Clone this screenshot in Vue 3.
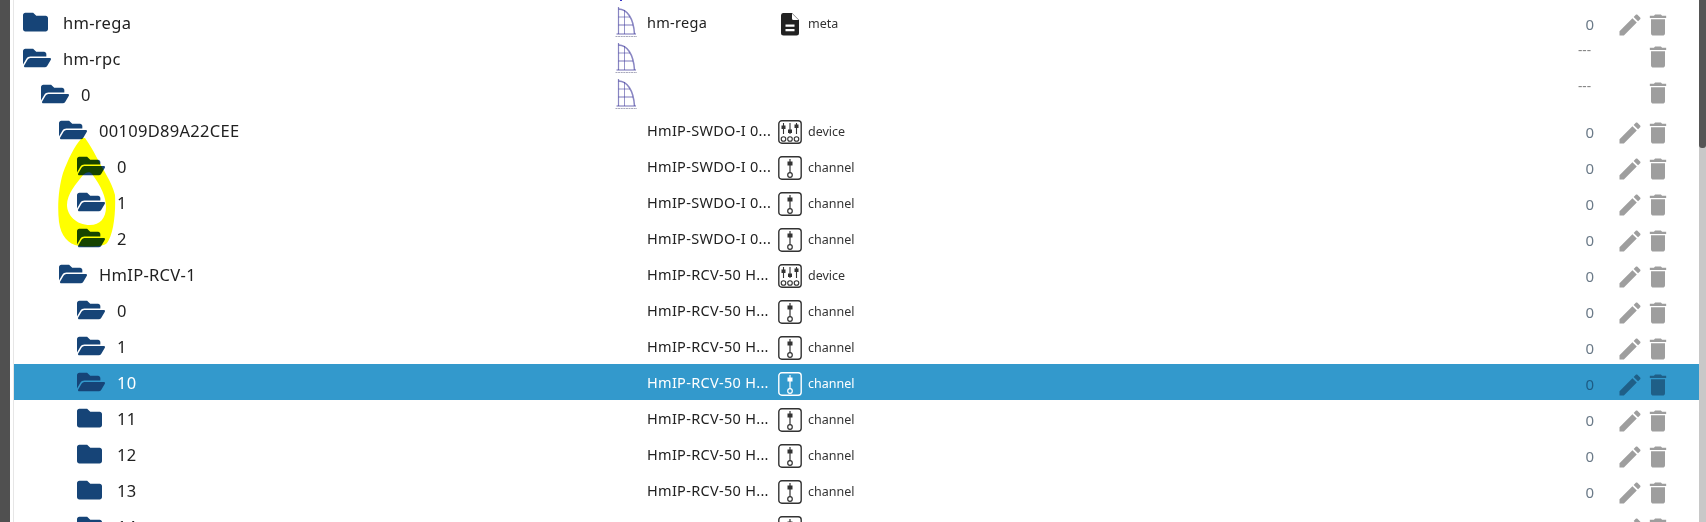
<script setup>
const paths = {
  closed: 'M464 128H272l-64-64H48C21.49 64 0 85.49 0 112v288c0 26.51 21.49 48 48 48h416c26.51 0 48-21.49 48-48V176c0-26.51-21.49-48-48-48z',
  open: 'M572.694 292.093L500.27 416.248A63.997 63.997 0 0 1 444.989 448H45.025c-18.523 0-30.064-20.093-20.731-36.093l72.424-124.155A64 64 0 0 1 152 256h399.964c18.523 0 30.064 20.093 20.73 36.093zM152 224h328v-48c0-26.51-21.49-48-48-48H272l-64-64H48C21.49 64 0 85.49 0 112v278.046l69.077-118.418C86.214 242.25 117.989 224 152 224z'
}
const swdo = 'HmIP-SWDO-I 0...'
const rcv = 'HmIP-RCV-50 H...'
const rows = [
  { level: 0, open: false, id: 'hm-rega', name: 'hm-rega', logo: true, icon: 'meta', type: 'meta', value: '0', edit: true },
  { level: 0, open: true, id: 'hm-rpc', name: '', logo: true, value: '---' },
  { level: 1, open: true, id: '0', name: '', logo: true, value: '---' },
  { level: 2, open: true, id: '00109D89A22CEE', name: swdo, icon: 'device', type: 'device', value: '0', edit: true },
  { level: 3, open: true, id: '0', name: swdo, icon: 'channel', type: 'channel', value: '0', edit: true },
  { level: 3, open: true, id: '1', name: swdo, icon: 'channel', type: 'channel', value: '0', edit: true },
  { level: 3, open: true, id: '2', name: swdo, icon: 'channel', type: 'channel', value: '0', edit: true },
  { level: 2, open: true, id: 'HmIP-RCV-1', name: rcv, icon: 'device', type: 'device', value: '0', edit: true },
  { level: 3, open: true, id: '0', name: rcv, icon: 'channel', type: 'channel', value: '0', edit: true },
  { level: 3, open: true, id: '1', name: rcv, icon: 'channel', type: 'channel', value: '0', edit: true },
  { level: 3, open: true, id: '10', name: rcv, icon: 'channel', type: 'channel', value: '0', edit: true, selected: true },
  { level: 3, open: false, id: '11', name: rcv, icon: 'channel', type: 'channel', value: '0', edit: true },
  { level: 3, open: false, id: '12', name: rcv, icon: 'channel', type: 'channel', value: '0', edit: true },
  { level: 3, open: false, id: '13', name: rcv, icon: 'channel', type: 'channel', value: '0', edit: true },
  { level: 3, open: false, id: '14', name: rcv, icon: 'channel', type: 'channel', value: '0', edit: true }
]
</script>

<template>
  <div class="page">
    <div class="sidebar"></div>
    <div class="tree">
      <i class="topdot"></i>
      <div v-for="(r, i) in rows" :key="i" class="row" :class="{ selected: r.selected }">
        <div class="cell-id" :style="{ paddingLeft: 9 + r.level * 18 + 'px' }">
          <svg v-if="r.open" class="folder-open" viewBox="0 64 576 384"><path :d="paths.open" /></svg>
          <svg v-else class="folder-closed" viewBox="0 64 512 384"><path :d="paths.closed" /></svg>
          <span class="id-text">{{ r.id }}</span>
        </div>
        <div class="cell-logo">
          <svg v-if="r.logo" class="logo" viewBox="0 0 24 32" fill="none">
            <g stroke="#3f3a9c" stroke-opacity=".62">
              <path d="M4.5 1V28" stroke-width="1.2" />
              <path d="M4.5 3C13 3 19.5 12 20.5 28" stroke-width="1.5" />
              <path d="M10.5 4V28" stroke-width=".9" />
              <path d="M4.5 11H16" stroke-width=".9" />
              <path d="M4.5 19H19" stroke-width="1.1" />
              <path d="M2.5 28H22" stroke-width="1.2" />
            </g>
            <path d="M1.5 30.5H23" stroke="#a8a8bc" stroke-width="1.2" stroke-dasharray="2 .6" />
          </svg>
        </div>
        <div class="cell-name">{{ r.name }}</div>
        <div class="cell-type">
          <svg v-if="r.icon === 'meta'" class="type-icon meta" viewBox="0 0 24 24">
            <path fill="currentColor" d="M5 1h9l7 7v13a2.500 2.500 0 0 1-2.500 2.500h-13A2.500 2.500 0 0 1 3 21V3.500A2.500 2.500 0 0 1 5 1z" />
            <path fill="#fff" d="M14 1.500l6.500 6.500H15.500A1.500 1.500 0 0 1 14 6.500zM7.500 12.500h9v2.200h-9zM7.500 17h9v2.200h-9z" />
          </svg>
          <svg v-else-if="r.icon === 'device'" class="type-icon" viewBox="0 0 24 24" fill="none" stroke="currentColor">
            <rect x=".8" y=".8" width="22.400" height="22.400" rx="3" stroke-width="1.400" />
            <g stroke-width="1.100">
              <path d="M5.500 3v11M12 3v11M18.500 3v11" />
              <circle cx="5.500" cy="19" r="2.300" />
              <circle cx="12" cy="19" r="2.300" />
              <circle cx="18.500" cy="19" r="2.300" />
            </g>
            <g fill="currentColor" stroke="none">
              <rect x="3.500" y="5.500" width="4" height="3.500" />
              <rect x="10" y="9.500" width="4" height="3.500" />
              <rect x="16.500" y="4.500" width="4" height="3.500" />
            </g>
          </svg>
          <svg v-else-if="r.icon === 'channel'" class="type-icon" viewBox="0 0 24 24" fill="none" stroke="currentColor">
            <rect x=".8" y=".8" width="22.400" height="22.400" rx="3" stroke-width="1.400" />
            <path d="M12 3v14" stroke-width="1.200" />
            <circle cx="12" cy="19" r="2.300" stroke-width="1.200" />
            <rect x="9.500" y="5.500" width="5" height="4" fill="currentColor" stroke="none" />
          </svg>
          <span v-if="r.type" class="type-text">{{ r.type }}</span>
        </div>
        <div class="cell-value" :class="{ dash: !r.edit }">{{ r.value }}</div>
        <div class="cell-actions" :class="{ low: r.edit }">
          <svg v-if="r.edit" class="action" viewBox="0 0 24 24"><path d="M3 17.250V21h3.750L17.810 9.940l-3.750-3.750L3 17.250zM20.710 7.040c.39-.39.39-1.020 0-1.410l-2.340-2.340c-.39-.39-1.020-.39-1.410 0l-1.830 1.830 3.750 3.750 1.830-1.830z" /></svg>
          <span v-else class="action-gap"></span>
          <svg class="action" viewBox="0 0 24 24"><path d="M6 19c0 1.100.9 2 2 2h8c1.100 0 2-.9 2-2V7H6v12zM19 4h-3.500l-1-1h-5l-1 1H5v2h14V4z" /></svg>
        </div>
      </div>
    </div>
    <div class="scrollbar"><div class="thumb"></div></div>
    <svg class="marker" viewBox="0 0 1706 522">
      <path fill="#ffff00" fill-rule="evenodd" d="M82 138C74 146 68 160 63 173C59 186 57 205 59 222C61 236 68 244 79 246C90 247 103 247 107 243C113 236 116 214 115 195C112 182 103 170 97 158C93 150 88 142 85 138zM83 175C76 184 67 194 67 205C67 215 76 225 90 225C100 225 106 218 106 207C106 197 101 186 92 174C90 171 86 172 83 175z" />
    </svg>
  </div>
</template>

<style>
html, body { margin: 0; background: #fff; }
</style>

<style scoped>
.page {
  position: relative;
  display: flex;
  width: 1706px;
  height: 522px;
  overflow: hidden;
  background: #fff;
  font-family: "Noto Sans", "Open Sans", sans-serif;
  color: #212121;
}
.sidebar {
  flex: 0 0 10px;
  background: #505050;
  margin-right: 3px;
}
.tree {
  position: relative;
  flex: 1 1 auto;
  padding-top: 4px;
  border-left: 1px solid #e6e6e6;
  min-width: 0;
}
.topdot {
  position: absolute;
  left: 606px;
  top: 0;
  width: 2px;
  height: 1px;
  background: #3a36c8;
}
.row {
  display: flex;
  align-items: center;
  height: 36px;
}
.row.selected { background: #3399cc; color: #fff; }
.cell-id {
  flex: 0 0 600px;
  box-sizing: border-box;
  display: flex;
  align-items: center;
  font-size: 16.500px;
  letter-spacing: .3px;
}
.folder-open, .folder-closed { fill: #164477; height: 20px; flex: none; }
.folder-open { width: 28px; }
.folder-closed { width: 25px; margin-right: 3px; }
.id-text { margin-left: 12px; white-space: nowrap; }
.cell-logo { flex: 0 0 33px; display: flex; align-items: center; }
.logo { width: 24px; height: 32px; }
.cell-name {
  flex: 0 0 131px;
  font-size: 14.500px;
  letter-spacing: .3px;
  white-space: nowrap;
  overflow: hidden;
}
.cell-type {
  flex: 0 0 770px;
  display: flex;
  align-items: center;
  padding-top: 3px;
  color: #333;
}
.selected .cell-type { color: #fff; }
.type-icon { width: 24px; height: 24px; flex: none; }
.meta { color: #222; }
.type-text { margin-left: 6px; font-size: 12.500px; }
.cell-value {
  flex: 0 0 46px;
  padding-top: 3px;
  text-align: right;
  font-size: 15px;
  color: #6b7a88;
}
.selected .cell-value { color: #1d5c85; }
.cell-value.dash {
  font-size: 13.500px;
  color: #888;
  padding-top: 0;
  margin-top: -17px;
  margin-right: 3px;
  flex-basis: 43px;
}
.cell-actions {
  display: flex;
  align-items: center;
  margin-left: 22px;
  margin-top: -2px;
}
.cell-actions.low { margin-top: 5px; }
.action { width: 28px; height: 28px; fill: #9e9e9e; flex: none; }
.selected .action { fill: #1f5f87; }
.action-gap { width: 28px; }
.scrollbar {
  flex: 0 0 7px;
  background: #c8c8c8;
}
.thumb { height: 148px; background: #555; border-radius: 0 0 3px 3px; }
.marker {
  position: absolute;
  left: 0;
  top: 0;
  width: 1706px;
  height: 522px;
  mix-blend-mode: multiply;
  pointer-events: none;
}
</style>
